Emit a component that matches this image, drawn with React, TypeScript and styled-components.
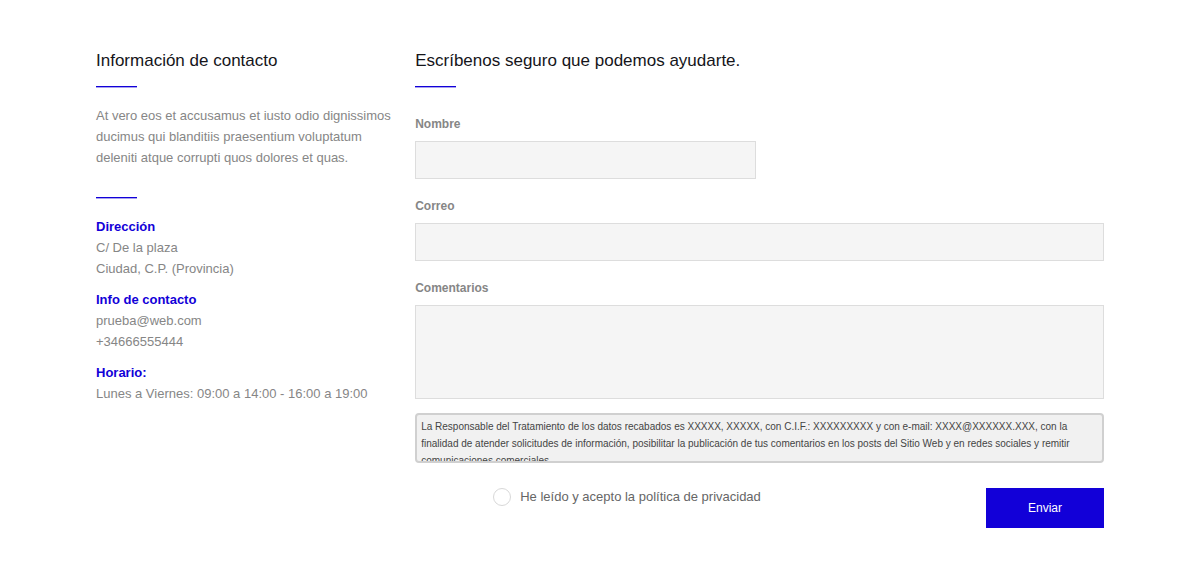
import React from "react";
import styled, { createGlobalStyle } from "styled-components";

const GlobalStyle = createGlobalStyle`
  *, *::before, *::after { box-sizing: border-box; }
  body {
    margin: 0;
    background: #ffffff;
    color: #868686;
    font-family: "Liberation Sans", Arial, Helvetica, sans-serif;
    font-size: 13px;
    line-height: 21px;
  }
`;

const Page = styled.main`
  display: grid;
  grid-template-columns: 3fr 7fr;
  gap: 24px;
  padding: 49px 8% 40px;

  @media (max-width: 800px) {
    grid-template-columns: 1fr;
  }
`;

const Column = styled.section`
  min-width: 0;
`;

const Title = styled.h2`
  margin: 0;
  color: #15151a;
  font-size: 17px;
  font-weight: 400;
  line-height: 24px;
`;

const Rule = styled.hr`
  width: 41px;
  height: 2px;
  margin: 13px 0 17px;
  border: 0;
  border-bottom: 1px solid #a8a2f0;
  background: #1200d8;
`;

const Intro = styled.p`
  margin: 0 0 29px;
`;

const Details = styled.dl`
  display: flex;
  flex-direction: column;
  gap: 10px;
  margin: 0;
`;

const Term = styled.dt`
  color: #1200d8;
  font-weight: 700;
`;

const Detail = styled.dd`
  margin: 0;
`;

const Form = styled.form`
  display: flex;
  flex-direction: column;
  padding-top: 9px;
`;

const Field = styled.div<{ $half?: boolean }>`
  display: flex;
  flex-direction: column;
  gap: 6px;
  width: ${(p) => (p.$half ? "calc(50% - 4px)" : "100%")};
  margin-bottom: 17px;
`;

const Label = styled.label`
  font-size: 12px;
  font-weight: 700;
`;

const Input = styled.input`
  width: 100%;
  height: 38px;
  padding: 8px;
  border: 1px solid #dddddd;
  border-radius: 0;
  background: #f5f5f5;
  font: inherit;
`;

const TextArea = styled(Input).attrs({ as: "textarea" })`
  display: block;
  height: 94px;
  resize: none;
`;

const Notice = styled.div`
  height: 50px;
  margin-top: -3px;
  padding: 3px 4px;
  overflow: hidden;
  border: 2px solid #d0d0d0;
  border-radius: 4px;
  background: #f1f1f1;
  color: #444444;
  font-size: 10px;
  line-height: 17px;
`;

const Actions = styled.div`
  display: flex;
  align-items: flex-start;
  justify-content: space-between;
  padding: 25px 0 0 78px;

  @media (max-width: 800px) {
    padding-left: 0;
  }
`;

const Consent = styled.label`
  display: flex;
  align-items: center;
  gap: 9px;
  color: #666666;
  line-height: 16px;
`;

const Radio = styled.input`
  flex: none;
  width: 18px;
  height: 18px;
  margin: 0;
  appearance: none;
  border: 1px solid #d8d8d8;
  border-radius: 50%;
  background: #ffffff;

  &:checked {
    background: #1200d8;
    box-shadow: inset 0 0 0 4px #ffffff;
  }
`;

const Submit = styled.button`
  width: 118px;
  height: 40px;
  border: 0;
  background: #1200d8;
  color: #ffffff;
  font-family: inherit;
  font-size: 12px;
  cursor: pointer;
`;

const contact = [
  { term: "Dirección", lines: ["C/ De la plaza", "Ciudad, C.P. (Provincia)"] },
  { term: "Info de contacto", lines: ["prueba@web.com", "+34666555444"] },
  { term: "Horario:", lines: ["Lunes a Viernes: 09:00 a 14:00 - 16:00 a 19:00"] },
];

export default function App() {
  return (
    <>
      <GlobalStyle />
      <Page>
        <Column>
          <Title>Información de contacto</Title>
          <Rule />
          <Intro>
            At vero eos et accusamus et iusto odio dignissimos ducimus qui blanditiis praesentium
            voluptatum deleniti atque corrupti quos dolores et quas.
          </Intro>
          <Rule />
          <Details>
            {contact.map(({ term, lines }) => (
              <div key={term}>
                <Term>{term}</Term>
                {lines.map((line) => (
                  <Detail key={line}>{line}</Detail>
                ))}
              </div>
            ))}
          </Details>
        </Column>
        <Column>
          <Title>Escríbenos seguro que podemos ayudarte.</Title>
          <Rule />
          <Form onSubmit={(e) => e.preventDefault()}>
            <Field $half>
              <Label htmlFor="nombre">Nombre</Label>
              <Input id="nombre" name="nombre" type="text" />
            </Field>
            <Field>
              <Label htmlFor="correo">Correo</Label>
              <Input id="correo" name="correo" type="email" />
            </Field>
            <Field>
              <Label htmlFor="comentarios">Comentarios</Label>
              <TextArea id="comentarios" name="comentarios" />
            </Field>
            <Notice>
              La Responsable del Tratamiento de los datos recabados es XXXXX, XXXXX, con C.I.F.:
              XXXXXXXXX y con e-mail: XXXX@XXXXXX.XXX, con la finalidad de atender solicitudes de
              información, posibilitar la publicación de tus comentarios en los posts del Sitio Web
              y en redes sociales y remitir comunicaciones comerciales.
            </Notice>
            <Actions>
              <Consent>
                <Radio type="radio" name="privacidad" value="acepto" />
                He leído y acepto la política de privacidad
              </Consent>
              <Submit type="submit">Enviar</Submit>
            </Actions>
          </Form>
        </Column>
      </Page>
    </>
  );
}
